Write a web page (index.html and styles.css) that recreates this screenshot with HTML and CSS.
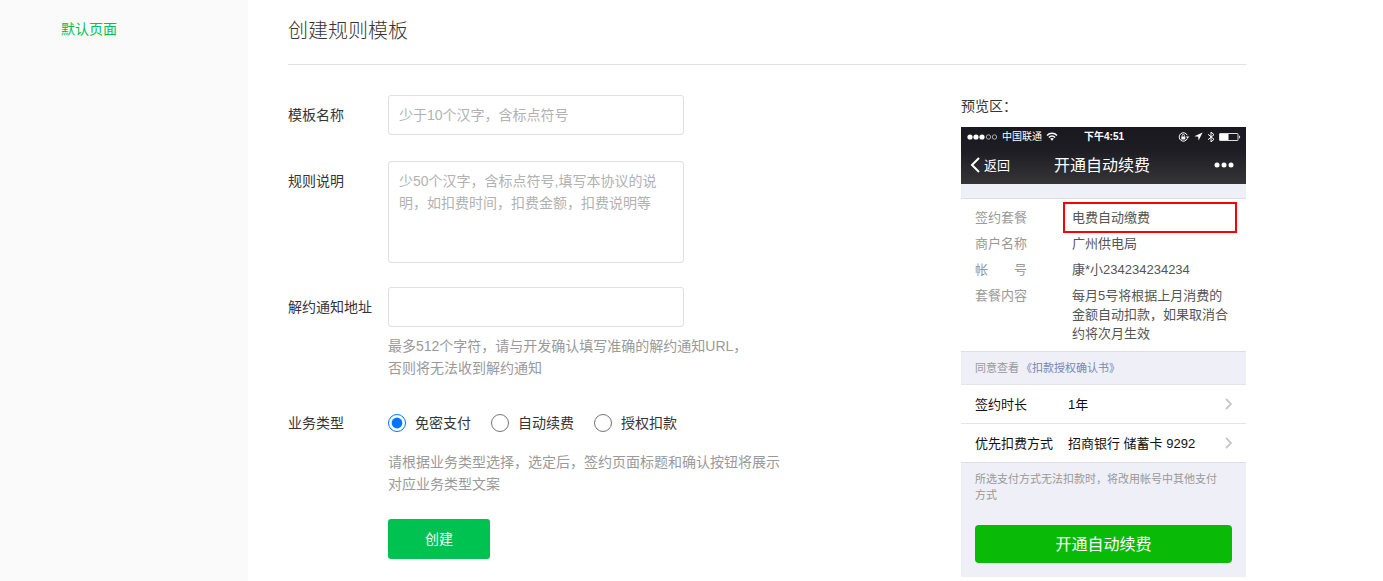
FILE: index.html
```html
<!DOCTYPE html>
<html lang="zh-CN">
<head>
    <meta charset="utf-8">
    <title>创建规则模板</title>
    <meta name="viewport" content="width=device-width, initial-scale=1.0">
    <link rel="stylesheet" href="styles.css">
</head>
<body>
    <div class="page">
        <nav class="sidebar">
            <a href="#">默认页面</a>
        </nav>

        <main class="main">
            <h1>创建规则模板</h1>

            <div class="content">
                <form class="rule-form">
                    <div class="row row-name">
                        <label class="row-label" for="name">模板名称</label>
                        <div class="row-body">
                            <input type="text" class="field" id="name" name="name" placeholder="少于10个汉字，含标点符号">
                        </div>
                    </div>

                    <div class="row">
                        <label class="row-label" for="desc">规则说明</label>
                        <div class="row-body">
                            <textarea class="field" id="desc" name="desc" placeholder="少50个汉字，含标点符号,填写本协议的说明，如扣费时间，扣费金额，扣费说明等"></textarea>
                        </div>
                    </div>

                    <div class="row">
                        <label class="row-label" for="url">解约通知地址</label>
                        <div class="row-body">
                            <input type="text" class="field" id="url" name="url">
                            <p class="tips">最多512个字符，请与开发确认填写准确的解约通知URL，<br>否则将无法收到解约通知</p>
                        </div>
                    </div>

                    <div class="row" role="radiogroup" aria-labelledby="typeLabel">
                        <span class="row-label" id="typeLabel">业务类型</span>
                        <div class="row-body">
                            <div class="radios">
                                <label><input type="radio" name="type" checked>免密支付</label>
                                <label><input type="radio" name="type">自动续费</label>
                                <label><input type="radio" name="type">授权扣款</label>
                            </div>
                            <p class="tips">请根据业务类型选择，选定后，签约页面标题和确认按钮将展示对应业务类型文案</p>
                        </div>
                    </div>

                    <button type="button" class="submit">创建</button>
                </form>

                <aside class="preview">
                    <h2>预览区：</h2>
                    <div class="phone">
                        <div class="phone-head">
                            <div class="status">
                                <div class="status-left">
                                    <svg width="31" height="6" viewBox="0 0 31 6" fill="#fff">
                                        <circle cx="3" cy="3" r="2.6"/>
                                        <circle cx="9" cy="3" r="2.6"/>
                                        <circle cx="15" cy="3" r="2.6"/>
                                        <circle cx="21.5" cy="3" r="2.2" fill="none" stroke="#ccc" stroke-width=".8"/>
                                        <circle cx="27.5" cy="3" r="2.2" fill="none" stroke="#ccc" stroke-width=".8"/>
                                    </svg>
                                    <span>中国联通</span>
                                    <svg width="12" height="9" viewBox="0 0 12 9" fill="none" stroke="#fff" stroke-width="1.5">
                                        <path d="M1 3.4C3.8.5 8.2.5 11 3.4M2.9 5.5c1.8-1.8 4.4-1.8 6.2 0"/>
                                        <path d="M4.2 6.8c1-1 2.6-1 3.6 0L6 8.7z" fill="#fff" stroke="none"/>
                                    </svg>
                                </div>
                                <span class="time">下午4:51</span>
                                <div class="status-right">
                                    <svg width="12" height="10" viewBox="0 0 12 10" fill="none" stroke="#fff">
                                        <path d="M9.3 6.5A4.2 4.2 0 1 1 9.2 3.2"/>
                                        <path d="M7.8 4.4h3.6L9.6 6.6z" fill="#fff" stroke="none"/>
                                        <path d="M3.3 4.5h4v3h-4z" fill="#fff" stroke="none"/>
                                        <path d="M4.2 4.6V3.4a1.1 1.1 0 0 1 2.2 0v1.2" stroke-width=".8"/>
                                    </svg>
                                    <svg width="9" height="9" viewBox="0 0 9 9" fill="#fff">
                                        <path d="M8.6.5L.4 4.3l3.8.5.4 3.8z"/>
                                    </svg>
                                    <svg width="8" height="12" viewBox="0 0 8 12" fill="none" stroke="#fff">
                                        <path d="M1 3.3l6 5-3 2.6V1.1l3 2.6-6 5"/>
                                    </svg>
                                    <svg width="22" height="8" viewBox="0 0 22 8">
                                        <rect x=".5" y=".5" width="18.5" height="7" rx=".5" fill="none" stroke="#ddd"/>
                                        <rect x="1" y="1" width="8.5" height="6" fill="#fff"/>
                                        <path d="M20 2.4c1.6.4 1.6 2.8 0 3.2z" fill="#ddd"/>
                                    </svg>
                                </div>
                            </div>
                            <div class="navbar">
                                <a href="#" class="back">
                                    <svg width="10" height="16" viewBox="0 0 10 16" fill="none" stroke="#fff" stroke-width="2">
                                        <path d="M9 1L2 8l7 7"/>
                                    </svg>
                                    返回
                                </a>
                                <strong>开通自动续费</strong>
                                <svg class="more" width="20" height="6" viewBox="0 0 20 6" fill="#fff">
                                    <circle cx="3" cy="3" r="2.5"/>
                                    <circle cx="10" cy="3" r="2.5"/>
                                    <circle cx="17" cy="3" r="2.5"/>
                                </svg>
                            </div>
                        </div>

                        <dl class="detail">
                            <dt>签约套餐</dt>
                            <dd class="marked">电费自动缴费</dd>
                            <dt>商户名称</dt>
                            <dd>广州供电局</dd>
                            <dt>帐 号</dt>
                            <dd>康*小234234234234</dd>
                            <dt>套餐内容</dt>
                            <dd>每月5号将根据上月消费的金额自动扣款，如果取消合约将次月生效</dd>
                        </dl>

                        <p class="agree">同意查看<a href="#">《扣款授权确认书》</a></p>

                        <div class="cells">
                            <div class="cell">
                                <span class="cell-label">签约时长</span>
                                <span>1年</span>
                                <svg width="8" height="12" viewBox="0 0 8 12" fill="none" stroke="#c7c7cc" stroke-width="1.8">
                                    <path d="M1 1l5 5-5 5"/>
                                </svg>
                            </div>
                            <div class="cell">
                                <span class="cell-label">优先扣费方式</span>
                                <span>招商银行 储蓄卡 9292</span>
                                <svg width="8" height="12" viewBox="0 0 8 12" fill="none" stroke="#c7c7cc" stroke-width="1.8">
                                    <path d="M1 1l5 5-5 5"/>
                                </svg>
                            </div>
                        </div>

                        <div class="phone-foot">
                            <p>所选支付方式无法扣款时，将改用帐号中其他支付<br>方式</p>
                            <button type="button">开通自动续费</button>
                        </div>
                    </div>
                </aside>
            </div>
        </main>
    </div>
</body>
</html>
```
FILE: styles.css
```css
* {
    box-sizing: border-box;
}

body {
    margin: 0;
    font-family: "Liberation Sans", "Noto Sans CJK SC", sans-serif;
    font-size: 14px;
    line-height: 22px;
    color: #353535;
    background-color: #fff;
}

h1, h2, p, dl, dd {
    margin: 0;
    font-weight: normal;
}

a {
    text-decoration: none;
}

svg {
    flex: none;
}

button, input, textarea {
    font: inherit;
}

.page {
    display: flex;
    min-height: 100vh;
}

.sidebar {
    flex: none;
    width: 248px;
    padding: 18px 0 0 61px;
    background-color: #fafafa;
}

.sidebar a {
    color: #00c250;
}

.main {
    flex: 1;
    padding: 0 137px 4px 40px;
}

h1 {
    padding: 16px 0 18px;
    font-size: 20px;
    font-weight: 300;
    line-height: 30px;
    border-bottom: 1px solid #e0e0e0;
}

.content {
    display: flex;
    justify-content: space-between;
    padding-top: 30px;
}

/* form */
.row {
    display: flex;
    margin-bottom: 24px;
}

.row-name {
    margin-bottom: 26px;
}

.row-label {
    flex: none;
    width: 100px;
    line-height: 40px;
}

.field {
    display: block;
    width: 296px;
    height: 40px;
    padding: 8px 10px;
    border: 1px solid #e0e0e0;
    border-radius: 3px;
    background-color: #fff;
    color: #353535;
}

textarea.field {
    height: 102px;
    padding-right: 20px;
    resize: none;
}

.field::placeholder {
    color: #b2b2b2;
}

.tips {
    max-width: 400px;
    margin-top: 8px;
    color: #9a9a9a;
}

.radios {
    display: flex;
    gap: 20px;
    height: 40px;
}

.radios label {
    display: flex;
    align-items: center;
}

.radios input {
    width: 18px;
    height: 18px;
    margin: 0 9px 0 0;
}

.submit {
    display: block;
    width: 102px;
    height: 40px;
    margin-left: 100px;
    border: none;
    border-radius: 3px;
    background-color: #00c250;
    color: #fff;
    cursor: pointer;
}

/* preview */
.preview {
    flex: none;
    width: 285px;
}

.preview h2 {
    margin-bottom: 10px;
    font-size: 14px;
}

.phone {
    font-size: 13px;
    line-height: 19px;
    background-color: #efeff7;
}

.phone-head {
    height: 57px;
    margin-bottom: 14px;
    color: #fff;
    background: linear-gradient(#1a1920, #1d1c22 40%, #353538);
}

.status {
    display: grid;
    grid-template-columns: 1fr auto 1fr;
    align-items: center;
    height: 19px;
    padding: 0 5px 0 6px;
    font-size: 10px;
}

.status-left, .status-right {
    display: flex;
    align-items: center;
    gap: 4px;
}

.status-right {
    justify-content: flex-end;
}

.time {
    font-weight: bold;
}

.navbar {
    display: grid;
    grid-template-columns: 1fr auto 1fr;
    align-items: center;
    height: 38px;
    padding: 0 12px 0 9px;
}

.back {
    display: flex;
    align-items: center;
    gap: 4px;
    color: #fff;
}

.navbar strong {
    font-size: 16px;
    font-weight: normal;
}

.more {
    justify-self: end;
}

.detail {
    display: grid;
    grid-template-columns: 52px 1fr;
    column-gap: 36px;
    row-gap: 7px;
    padding: 9px 9px 8px 14px;
    border-top: 1px solid #dddde4;
    background-color: #fff;
}

.detail dt {
    color: #999;
    text-align-last: justify;
}

.detail dd {
    padding: 0 4px 0 9px;
    color: #555;
}

.detail .marked {
    margin: -6px 0;
    padding: 4px 4px 4px 7px;
    border: 2px solid #f00;
}

.agree {
    padding: 7px 14px 6px;
    font-size: 11px;
    color: #999;
    border-top: 1px solid #dddde4;
}

.agree a {
    margin-left: 2px;
    color: #7388b5;
}

.cells {
    color: #111;
    background-color: #fff;
}

.cell {
    display: flex;
    align-items: center;
    height: 39px;
    padding: 0 13px 0 14px;
    border-top: 1px solid #e4e4e9;
}

.cell-label {
    width: 93px;
}

.cell svg {
    margin-left: auto;
}

.phone-foot {
    padding: 8px 14px 14px;
    border-top: 1px solid #dddde4;
}

.phone-foot p {
    margin-bottom: 22px;
    font-size: 11px;
    line-height: 16px;
    color: #999;
}

.phone-foot button {
    display: block;
    width: 100%;
    height: 38px;
    border: none;
    border-radius: 4px;
    font-size: 16px;
    color: #fff;
    background-color: #09bb07;
}
```
